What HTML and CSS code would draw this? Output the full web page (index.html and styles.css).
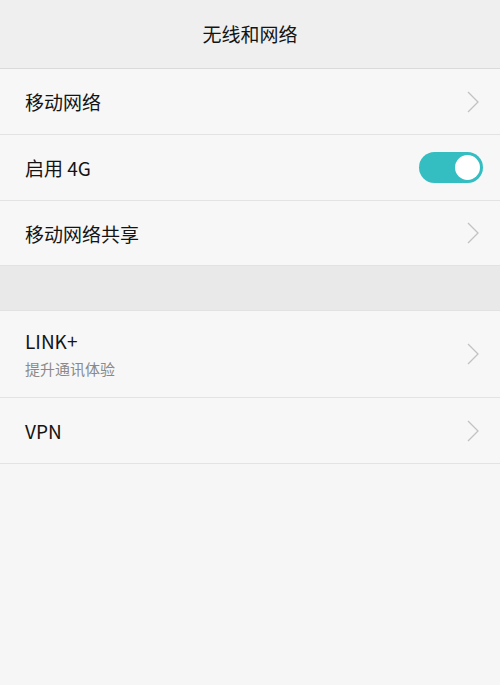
FILE: index.html
```html
<!DOCTYPE html>
<html>

<head>
    <meta name='viewport' content='width=device-width, initial-scale=1'>
    <title>无线和网络</title>
    <link rel="stylesheet" href="styles.css">
</head>

<body>
    <div class='header'>无线和网络</div>
    <div class='group'>
        <div class='row'>
            <span class='label'>移动网络</span>
            <svg class='chevron' viewBox='0 0 12 22'><polyline points='1,1 11,11 1,21' /></svg>
        </div>
        <div class='row'>
            <span class='label'>启用 4G</span>
            <div class='toggle'><div class='knob'></div></div>
        </div>
        <div class='row last'>
            <span class='label'>移动网络共享</span>
            <svg class='chevron' viewBox='0 0 12 22'><polyline points='1,1 11,11 1,21' /></svg>
        </div>
    </div>
    <div class='gap'></div>
    <div class='group'>
        <div class='row tall'>
            <div class='texts'>
                <span class='label'>LINK+</span>
                <span class='sub'>提升通讯体验</span>
            </div>
            <svg class='chevron' viewBox='0 0 12 22'><polyline points='1,1 11,11 1,21' /></svg>
        </div>
        <div class='row'>
            <span class='label'>VPN</span>
            <svg class='chevron' viewBox='0 0 12 22'><polyline points='1,1 11,11 1,21' /></svg>
        </div>
    </div>
</body>

</html>
```

FILE: styles.css
```css
body {
    margin: 0;
    background: #f6f6f6;
    font-family: "Noto Sans CJK SC", "Noto Sans", sans-serif;
    color: #141414;
}

.header {
    height: 68px;
    line-height: 68px;
    text-align: center;
    font-size: 19px;
    background: #efefef;
    border-bottom: 1px solid #dadada;
}

.group {
    background: #f7f7f7;
}

.row {
    display: flex;
    align-items: center;
    justify-content: space-between;
    height: 65px;
    padding: 0 17px 0 25px;
    border-bottom: 1px solid #e3e3e3;
}

.row.last {
    height: 64px;
    border-bottom: none;
}

.row.tall {
    height: 86px;
}

.label {
    font-size: 19px;
}

.texts {
    display: flex;
    flex-direction: column;
    gap: 4px;
    margin-top: -3px;
}

.sub {
    font-size: 15px;
    color: #8a8a8a;
}

.chevron {
    width: 12px;
    height: 22px;
    margin-right: 4px;
    fill: none;
    stroke: #c2c2c2;
    stroke-width: 1.3;
}

.toggle {
    width: 64px;
    height: 31px;
    border-radius: 16px;
    background: #35bec2;
    display: flex;
    align-items: center;
    justify-content: flex-end;
    padding-right: 3px;
    box-sizing: border-box;
}

.knob {
    width: 25px;
    height: 25px;
    border-radius: 50%;
    background: #ffffff;
}

.gap {
    height: 44px;
    background: #e9e9e9;
    border-top: 1px solid #e2e2e2;
    border-bottom: 1px solid #e2e2e2;
}
```
